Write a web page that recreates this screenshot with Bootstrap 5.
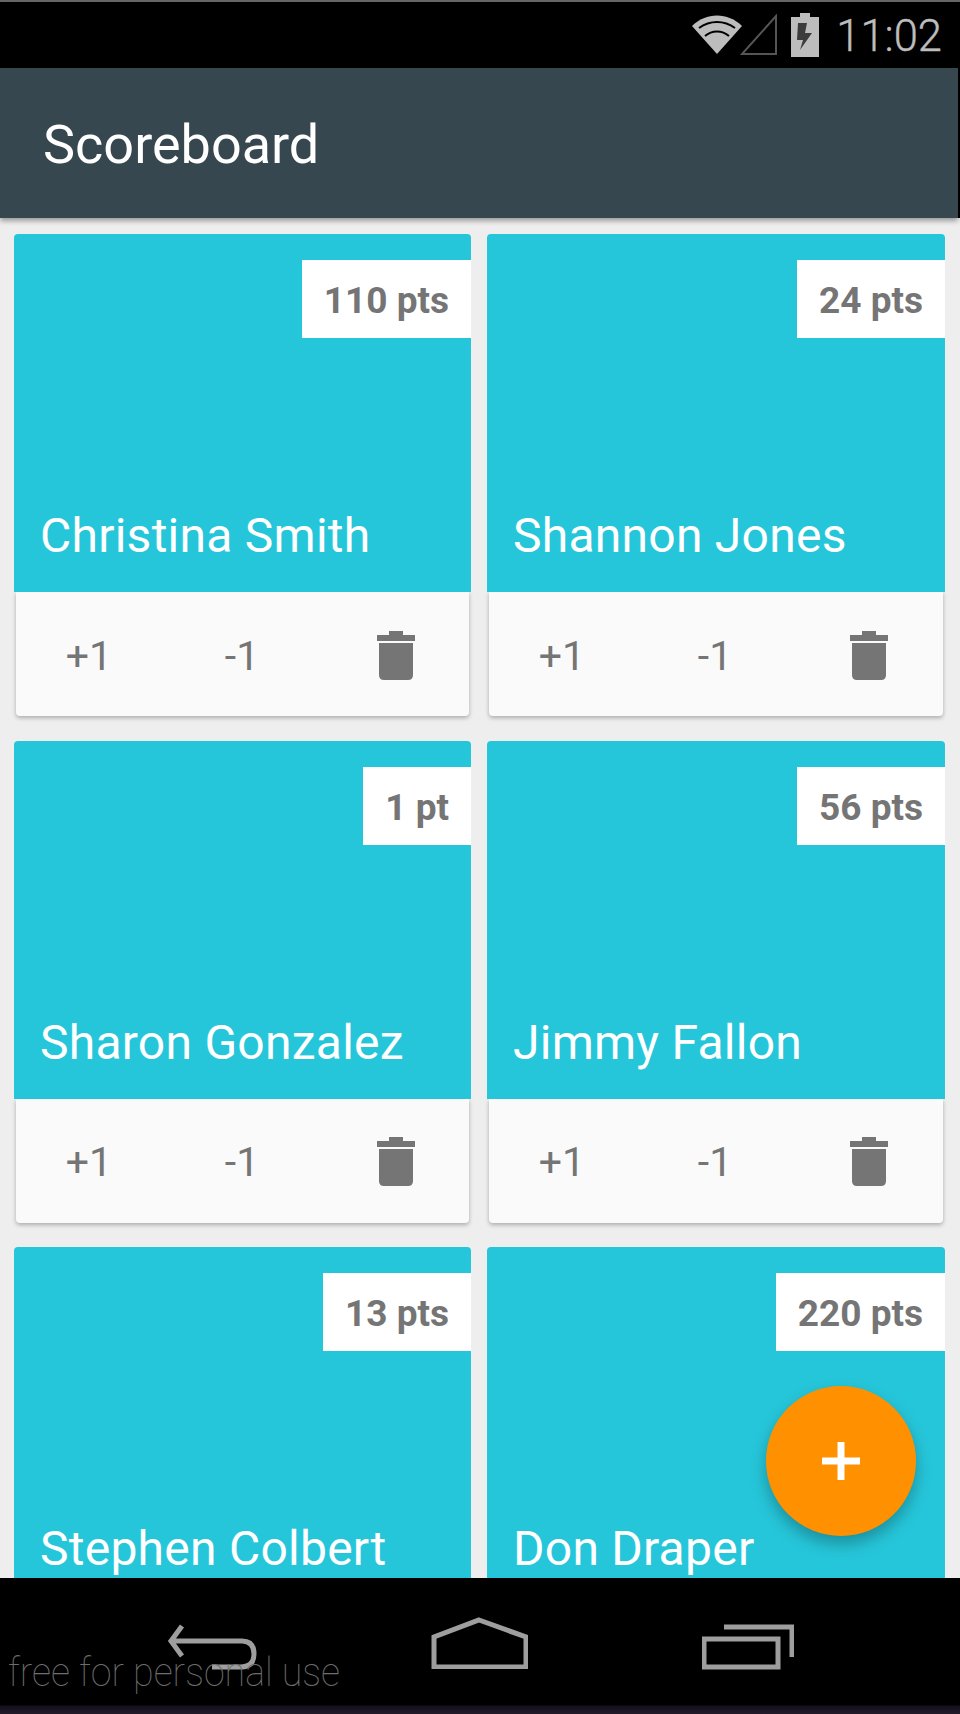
<!DOCTYPE html>
<html lang="en">
<head>
<meta charset="utf-8">
<title>Scoreboard</title>
<link href="https://cdn.jsdelivr.net/npm/bootstrap@5.3.0/dist/css/bootstrap.min.css" rel="stylesheet">
<style>
html,body{margin:0;background:#000;}
body{font-family:Roboto,"Liberation Sans",sans-serif;}
.phone{width:960px;height:1714px;overflow:hidden;position:relative;background:#000;}
.status-strip{height:68px;flex:none;background:#000;border-top:2px solid #666;padding-right:18px;color:#bdbdbd;}
.status-time{font-size:43.500px;font-weight:300;line-height:1;margin-left:17px;padding-top:4px;-webkit-text-stroke:.4px #bdbdbd;}
.app-bar{height:150px;flex:none;background:#37474f;margin-right:2px;padding-left:43px;padding-top:4px;color:#fff;font-size:54px;line-height:1;box-shadow:0 3px 5px rgba(0,0,0,.35);position:relative;z-index:2;}
.board{flex:1 1 auto;min-height:0;overflow:hidden;background:#eee;padding:16px 15px 0 14px;display:grid;grid-template-columns:457px 458px;grid-auto-rows:482px;column-gap:16px;row-gap:24.500px;}
.score-card{background:transparent;border:0;border-radius:4px;}
.score-head{height:358px;background:#26c6da;border-radius:4px 4px 0 0;position:relative;display:flex;align-items:flex-end;padding:0 0 27px 26px;color:#fff;font-size:48px;line-height:1.2;letter-spacing:.25px;}
.score-tag{position:absolute;top:26px;right:0;height:78px;background:#fff;color:#757575;font-size:37px;font-weight:700;line-height:78px;padding:2px 22px 0 22px;letter-spacing:0;}
.score-foot{height:124px;margin:0 2px;background:#fafafa;border-radius:0 0 4px 4px;box-shadow:0 2px 4px rgba(0,0,0,.28);color:#757575;font-size:41px;line-height:1;display:flex;align-items:center;}
.foot-btn{flex:none;text-align:center;padding:4px 0 0;}
.btn-plus{width:146px;}
.btn-minus{width:160px;}
.btn-trash{width:147px;padding:3px 0 0;}
.nav-strip{height:136px;flex:none;background:linear-gradient(#000 127px,#15101c 128px,#221a2a);position:relative;z-index:3;}
.nav-ico{position:absolute;}
.fab{position:absolute;left:766px;top:1386px;width:150px;height:150px;border-radius:50%;background:#ff9100;box-shadow:0 8px 16px rgba(0,0,0,.28);z-index:2;display:flex;align-items:center;justify-content:center;}
.mark-text{position:absolute;left:8px;top:1649px;z-index:4;color:#6e6e6e;font-size:40px;font-weight:100;line-height:1.2;transform:scaleX(.94);transform-origin:left;white-space:nowrap;}
</style>
</head>
<body>
<div class="phone d-flex flex-column">
  <div class="status-strip d-flex justify-content-end align-items-center">
    <svg width="50" height="40" viewBox="0 0 50 40"><path d="M0 11C14-3 36-3 50 11L25 39Z" fill="#bdbdbd"/><path d="M7 13C18 5 32 5 43 13M13 21C20 15 30 15 37 21" fill="none" stroke="#000" stroke-width="2"/></svg>
    <svg width="38" height="42" viewBox="0 0 38 42" style="margin-left:-2px"><path d="M36 2V40H2Z" fill="none" stroke="#555" stroke-width="2"/></svg>
    <svg width="28" height="44" viewBox="0 0 28 44" style="margin-left:13px"><path d="M9 0H19V4H28V44H0V4H9Z" fill="#bdbdbd"/><path d="M16 10H7L6 27H12L9 37L21 20H14Z" fill="#3c3c3c"/></svg>
    <div class="status-time">11:02</div>
  </div>
  <div class="app-bar d-flex align-items-center">Scoreboard</div>
  <div class="board">
    <div class="card score-card"><div class="score-head"><span class="score-tag">110 pts</span>Christina Smith</div><div class="score-foot"><div class="foot-btn btn-plus">+1</div><div class="foot-btn btn-minus">-1</div><div class="foot-btn btn-trash"><svg width="38" height="50" viewBox="0 0 38 50"><path d="M12 0H26V4H38V10H0V4H12ZM2 12H36V44Q36 49 31 49H7Q2 49 2 44Z" fill="#757575"/></svg></div></div></div>
    <div class="card score-card"><div class="score-head"><span class="score-tag">24 pts</span>Shannon Jones</div><div class="score-foot"><div class="foot-btn btn-plus">+1</div><div class="foot-btn btn-minus">-1</div><div class="foot-btn btn-trash"><svg width="38" height="50" viewBox="0 0 38 50"><path d="M12 0H26V4H38V10H0V4H12ZM2 12H36V44Q36 49 31 49H7Q2 49 2 44Z" fill="#757575"/></svg></div></div></div>
    <div class="card score-card"><div class="score-head"><span class="score-tag">1 pt</span>Sharon Gonzalez</div><div class="score-foot"><div class="foot-btn btn-plus">+1</div><div class="foot-btn btn-minus">-1</div><div class="foot-btn btn-trash"><svg width="38" height="50" viewBox="0 0 38 50"><path d="M12 0H26V4H38V10H0V4H12ZM2 12H36V44Q36 49 31 49H7Q2 49 2 44Z" fill="#757575"/></svg></div></div></div>
    <div class="card score-card"><div class="score-head"><span class="score-tag">56 pts</span>Jimmy Fallon</div><div class="score-foot"><div class="foot-btn btn-plus">+1</div><div class="foot-btn btn-minus">-1</div><div class="foot-btn btn-trash"><svg width="38" height="50" viewBox="0 0 38 50"><path d="M12 0H26V4H38V10H0V4H12ZM2 12H36V44Q36 49 31 49H7Q2 49 2 44Z" fill="#757575"/></svg></div></div></div>
    <div class="card score-card"><div class="score-head"><span class="score-tag">13 pts</span>Stephen Colbert</div></div>
    <div class="card score-card"><div class="score-head"><span class="score-tag">220 pts</span>Don Draper</div></div>
  </div>
  <div class="fab"><svg width="38" height="38" viewBox="0 0 38 38"><path d="M15.500 0h7v15.500H38v7H22.500V38h-7V22.500H0v-7h15.500Z" fill="#fff"/></svg></div>
  <div class="nav-strip">
    <svg class="nav-ico" style="left:166px;top:46px" width="92" height="46" viewBox="0 0 92 46"><path d="M16 2L5 17L16 32M5 17H76Q88 17 88 30Q88 43 74 43H46" fill="none" stroke="#9e9e9e" stroke-width="5"/></svg>
    <svg class="nav-ico" style="left:431px;top:39px" width="97" height="52" viewBox="0 0 97 52"><path d="M48 3L95 20V50H3V20Z" fill="none" stroke="#9e9e9e" stroke-width="5"/></svg>
    <svg class="nav-ico" style="left:702px;top:46px" width="92" height="46" viewBox="0 0 92 46"><path d="M2 15H76V43H2ZM22 3H90V33" fill="none" stroke="#9e9e9e" stroke-width="5"/></svg>
  </div>
  <div class="mark-text">free for personal use</div>
</div>
</body>
</html>
